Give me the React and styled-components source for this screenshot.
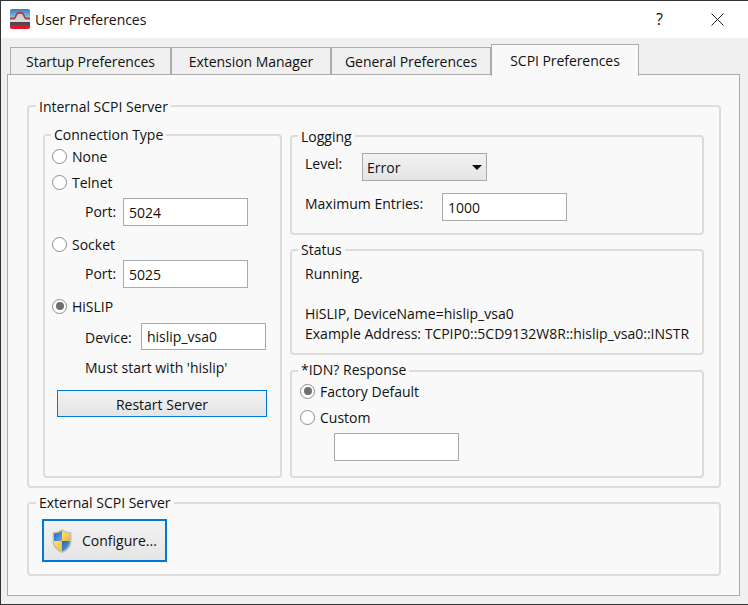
import React from 'react';
import styled, { createGlobalStyle } from 'styled-components';

const Global = createGlobalStyle`
  html, body { margin: 0; padding: 0; background: #f0f0f0; }
  body { font-family: "Open Sans", "Noto Sans", "Liberation Sans", sans-serif; font-size: 14px; color: #111; }
  * { box-sizing: border-box; }
`;
const Win = styled.div`
  position: relative; width: 748px; height: 605px; overflow: hidden;
  background: #f0f0f0; border-top: 1px solid #333; border-left: 1px solid #333; border-bottom: 1px solid #333;
`;
const TitleBar = styled.div`
  position: absolute; left: 0; top: 0; right: 0; height: 37px; background: #fff;
`;
const AppIcon = styled.svg`position: absolute; left: 9px; top: 8px;`;
const TitleText = styled.span`position: absolute; left: 34px; top: 9px; line-height: 20px; letter-spacing: -0.05px;`;
const Help = styled.span`position: absolute; left: 655px; top: 7px; line-height: 22px; font-size: 16px;`;
const CloseIcon = styled.svg`position: absolute; left: 710px; top: 12px;`;
const Tab = styled.div`
  position: absolute; left: ${p => p.$x - 1}px; top: ${p => p.$active ? 43 : 46}px; width: ${p => p.$w}px;
  height: ${p => p.$active ? 32 : 28}px; z-index: ${p => p.$active ? 3 : 1};
  background: ${p => p.$active ? '#f9f9f9' : '#f0f0f0'};
  border: 1px solid #acacac; border-width: 1px 1px 0 1px;
  text-align: center; line-height: ${p => p.$active ? 32 : 28}px; letter-spacing: -0.06px;
`;
const Page = styled.div`
  position: absolute; left: 6px; top: 73px; width: 733px; height: 522px;
  background: #f9f9f9; border: 1px solid #acacac; z-index: 2;
`;
const Group = styled.div`
  position: absolute; left: ${p => p.$x - 8}px; top: ${p => p.$y - 75}px; width: ${p => p.$w}px; height: ${p => p.$h}px;
  border: 2px solid #dcdcdc; border-radius: 4px;
`;
const Legend = styled.span`
  position: absolute; left: ${p => p.$x ?? 6}px; top: ${p => p.$top ?? -11}px; padding: 0 3px; line-height: 20px; background: #f9f9f9; white-space: nowrap;
`;
const Text = styled.span`
  position: absolute; left: ${p => p.$x - 8}px; top: ${p => p.$y - 85}px; line-height: 20px; white-space: nowrap;
`;
const Field = styled.div`
  position: absolute; left: ${p => p.$x - 8}px; top: ${p => p.$y - 75}px; width: 125px; height: ${p => p.$h ?? 28}px;
  background: #fff; border: 1px solid #a9a9a9; padding-left: 5px; line-height: ${p => (p.$h ?? 28) - 1}px;
`;
const RadioWrap = styled.div`
  position: absolute; left: ${p => p.$x - 8}px; top: ${p => p.$y - 85}px; height: 20px; display: flex; align-items: center; gap: 5px; white-space: nowrap;
`;
const RadioLabel = styled.span`position: relative; top: 1px; line-height: 20px;`;
const RadioDot = styled.span`
  width: 15px; height: 15px; border-radius: 50%; background: #fff; border: 1.5px solid #8e8e8e; display: flex; align-items: center; justify-content: center; flex: none;
  &::after { content: ''; width: 8px; height: 8px; border-radius: 50%; background: ${p => p.$on ? '#6f6f6f' : 'transparent'}; }
`;
const Button = styled.div`
  position: absolute; left: ${p => p.$x - 8}px; top: ${p => p.$y - 75}px; width: ${p => p.$w}px; height: ${p => p.$h}px;
  border: 1px solid #0078d7; padding-top: 2px; background: linear-gradient(#f2f2f2, #e5e5e5);
  display: flex; align-items: center; justify-content: center;
`;
const ConfigureButton = styled(Button)`border-width: 2px; padding-top: 0; justify-content: flex-start; padding-left: 7px; gap: 9px;`;
const Combo = styled.div`
  position: absolute; left: ${p => p.$x - 8}px; top: ${p => p.$y - 75}px; width: 125px; height: 28px;
  border: 1px solid #a9a9a9; background: linear-gradient(#f2f2f2, #e5e5e5); padding-left: 4px; line-height: 28px;
  &::after { content: ''; position: absolute; right: 4px; top: 11px; border: 5px solid transparent; border-top: 5px solid #111; border-bottom: 0; }
`;

const Logo = () => (
  <AppIcon width="20" height="20" viewBox="0 0 20 20">
    <defs><linearGradient id="sky" x1="0" y1="0" x2="0" y2="1"><stop offset="0" stopColor="#2f7fc4"/><stop offset=".7" stopColor="#cdeef9"/><stop offset="1" stopColor="#e4f4fa"/></linearGradient></defs>
    <rect width="20" height="20" rx="2" fill="url(#sky)"/>
    <path d="M0 9H4C6 9 6 4 8 4H12C14 4 14 9 16 9H20V13H0Z" fill="#e9d8d2" opacity=".75"/>
    <path d="M0 9.500H4C6 9.500 6 4 8 4H12C14 4 14 9.500 16 9.500H20" fill="none" stroke="#a8463a" strokeWidth="1.800"/>
    <rect y="13" width="20" height="3" fill="#4f4a4a"/>
    <path d="M0 16H20V18A2 2 0 0 1 18 20H2A2 2 0 0 1 0 18Z" fill="#e8102a"/>
  </AppIcon>
);
const Shield = () => (
  <svg width="22" height="26" viewBox="0 0 22 26" style={{ flex: 'none' }}>
    <defs>
      <linearGradient id="bl" x1="0" y1="0" x2="1" y2="1"><stop offset="0" stopColor="#1e63bd"/><stop offset="1" stopColor="#6aa6e6"/></linearGradient>
      <linearGradient id="yl" x1="0" y1="0" x2="1" y2="1"><stop offset="0" stopColor="#ffe27a"/><stop offset="1" stopColor="#edb92c"/></linearGradient>
    </defs>
    <path d="M11 1C8 3.500 5 4 1.500 4.200V13C1.500 19 6 23 11 25C16 23 20.500 19 20.500 13V4.200C17 4 14 3.500 11 1Z" fill="#c2c2ad"/>
    <path d="M11 3V13H3V5.500C6 5.300 8.500 4.800 11 3Z" fill="url(#bl)"/>
    <path d="M11 3C13.500 4.800 16 5.300 19 5.500V13H11Z" fill="url(#yl)"/>
    <path d="M3 13H11V23.500C7 21.800 3.300 18.500 3 13Z" fill="url(#yl)"/>
    <path d="M11 13H19C18.700 18.500 15 21.800 11 23.500Z" fill="url(#bl)"/>
  </svg>
);
const Radio = ({ x, y, on, children }) => (
  <RadioWrap $x={x} $y={y}><RadioDot $on={on} /><RadioLabel>{children}</RadioLabel></RadioWrap>
);

export default function App() {
  return (
    <>
      <Global />
      <Win>
        <TitleBar>
          <Logo />
          <TitleText>User Preferences</TitleText>
          <Help>?</Help>
          <CloseIcon width="13" height="13" viewBox="0 0 13 13"><path d="M.5.5l12 12M12.500.5l-12 12" stroke="#222" strokeWidth="1" fill="none"/></CloseIcon>
        </TitleBar>
        <Tab $x={10} $w={161}>Startup Preferences</Tab>
        <Tab $x={171} $w={160}>Extension Manager</Tab>
        <Tab $x={331} $w={160}>General Preferences</Tab>
        <Tab $x={491} $w={148} $active>SCPI Preferences</Tab>
        <Page>
          <Group $x={27} $y={105} $w={694} $h={383}><Legend $x={7} $top={-10}>Internal SCPI Server</Legend></Group>
          <Group $x={43} $y={134} $w={239} $h={344}><Legend>Connection Type</Legend></Group>
          <Radio x={52} y={156}>None</Radio>
          <Radio x={52} y={182}>Telnet</Radio>
          <Text $x={85} $y={212}>Port:</Text>
          <Field $x={123} $y={198}>5024</Field>
          <Radio x={52} y={244}>Socket</Radio>
          <Text $x={85} $y={274}>Port:</Text>
          <Field $x={123} $y={260}>5025</Field>
          <Radio x={52} y={306} on>HiSLIP</Radio>
          <Text $x={85} $y={338}>Device:</Text>
          <Field $x={141} $y={323} $h={27}>hislip_vsa0</Field>
          <Text $x={85} $y={368}>Must start with 'hislip'</Text>
          <Button $x={57} $y={390} $w={210} $h={27}>Restart Server</Button>

          <Group $x={290} $y={135} $w={414} $h={100}><Legend $top={-10}>Logging</Legend></Group>
          <Text $x={305} $y={164}>Level:</Text>
          <Combo $x={362} $y={153}>Error</Combo>
          <Text $x={305} $y={204}>Maximum Entries:</Text>
          <Field $x={442} $y={193}>1000</Field>

          <Group $x={290} $y={249} $w={414} $h={106}><Legend>Status</Legend></Group>
          <Text $x={305} $y={274}>Running.</Text>
          <Text $x={305} $y={314}>HiSLIP, DeviceName=hislip_vsa0</Text>
          <Text $x={305} $y={334}>Example Address: TCPIP0::5CD9132W8R::hislip_vsa0::INSTR</Text>

          <Group $x={290} $y={370} $w={414} $h={108}><Legend $top={-12}>*IDN? Response</Legend></Group>
          <Radio x={300} y={391} on>Factory Default</Radio>
          <Radio x={300} y={417}>Custom</Radio>
          <Field $x={334} $y={433}></Field>

          <Group $x={27} $y={502} $w={694} $h={74}><Legend $x={7}>External SCPI Server</Legend></Group>
          <ConfigureButton $x={42} $y={519} $w={125} $h={43}><Shield />Configure...</ConfigureButton>
        </Page>
      </Win>
    </>
  );
}
